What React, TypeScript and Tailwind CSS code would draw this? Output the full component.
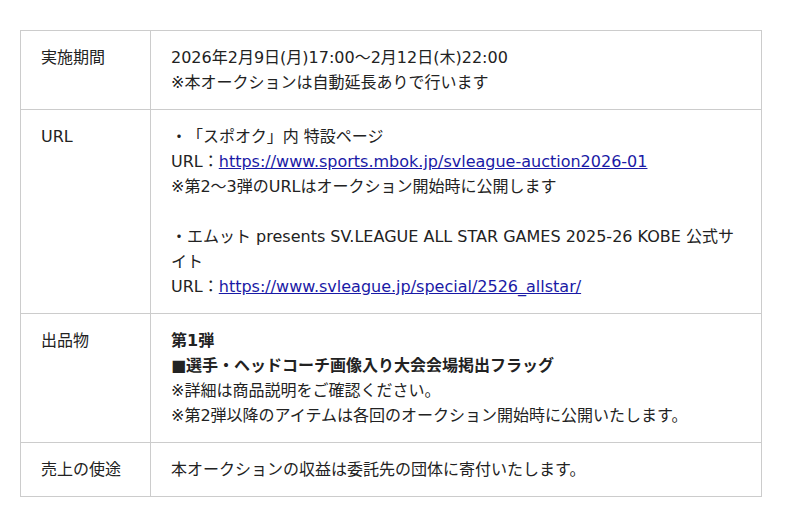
const ROWS: { label: string; body: React.ReactNode }[] = [
  {
    label: '実施期間',
    body: (
      <>
        <p>2026年2月9日(月)17:00〜2月12日(木)22:00</p>
        <p>※本オークションは自動延長ありで行います</p>
      </>
    ),
  },
  {
    label: 'URL',
    body: (
      <>
        <p>・「スポオク」内 特設ページ</p>
        <p>
          URL：
          <a href="#" className="text-[#1a1aa6] underline">
            https://www.sports.mbok.jp/svleague-auction2026-01
          </a>
        </p>
        <p>※第2〜3弾のURLはオークション開始時に公開します</p>
        <p>&nbsp;</p>
        <p>・エムット presents SV.LEAGUE ALL STAR GAMES 2025-26 KOBE 公式サイト</p>
        <p>
          URL：
          <a href="#" className="text-[#1a1aa6] underline">
            https://www.svleague.jp/special/2526_allstar/
          </a>
        </p>
      </>
    ),
  },
  {
    label: '出品物',
    body: (
      <>
        <p className="font-bold">第1弾</p>
        <p className="font-bold">■選手・ヘッドコーチ画像入り大会会場掲出フラッグ</p>
        <p>※詳細は商品説明をご確認ください。</p>
        <p>※第2弾以降のアイテムは各回のオークション開始時に公開いたします。</p>
      </>
    ),
  },
  {
    label: '売上の使途',
    body: <p>本オークションの収益は委託先の団体に寄付いたします。</p>,
  },
];

export default function App() {
  return (
    <div className="min-h-[527px] w-[800px] bg-white px-5 pt-[30px] font-['DejaVu_Sans','Noto_Sans_CJK_JP',sans-serif] text-[16px] leading-[25px] text-[#222] [text-spacing-trim:space-all]">
      <table className="w-[742px] border-collapse">
        <tbody>
          {ROWS.map((row) => (
            <tr key={row.label}>
              <th className="w-[130px] border border-[#cccccc] px-5 py-[14px] text-left align-top font-normal">
                {row.label}
              </th>
              <td className="border border-[#cccccc] px-5 py-[14px] align-top">{row.body}</td>
            </tr>
          ))}
        </tbody>
      </table>
    </div>
  );
}
